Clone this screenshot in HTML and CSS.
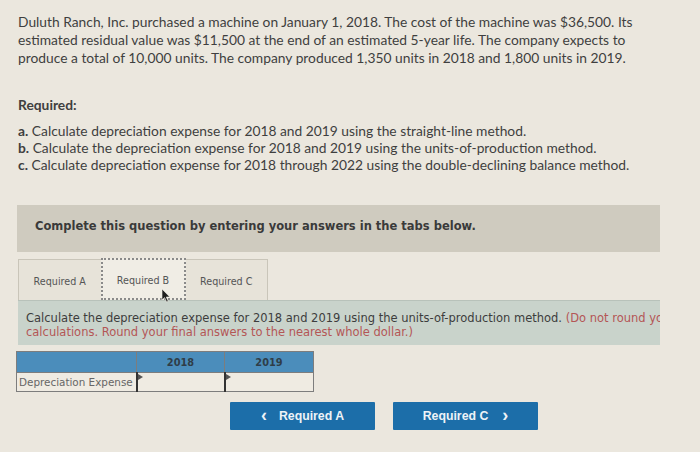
FILE: index.html
```html
<!DOCTYPE html>
<html>
<head>
<meta charset="utf-8">
<link rel="stylesheet" href="styles.css">
</head>
<body>
<div class="page">
  <p class="intro">Duluth Ranch, Inc. purchased a machine on January 1, 2018. The cost of the machine was $36,500. Its estimated residual value was $11,500 at the end of an estimated 5-year life. The company expects to produce a total of 10,000 units. The company produced 1,350 units in 2018 and 1,800 units in 2019.</p>
  <p class="req-title">Required:</p>
  <ul class="req-list">
    <li><b>a.</b> Calculate depreciation expense for 2018 and 2019 using the straight-line method.</li>
    <li><b>b.</b> Calculate the depreciation expense for 2018 and 2019 using the units-of-production method.</li>
    <li><b>c.</b> Calculate depreciation expense for 2018 through 2022 using the double-declining balance method.</li>
  </ul>
  <div class="band">Complete this question by entering your answers in the tabs below.</div>
  <div class="tabs">
    <div class="tab">Required A</div>
    <div class="tab active">Required B<svg class="cursor" width="10" height="15" viewBox="0 0 10 15"><path d="M1 1 L1 12 L3.6 9.6 L5.6 14 L7.2 13.3 L5.3 9 L8.8 9 Z" fill="#1e1e1e" stroke="#f4f1ea" stroke-width="0.6"/></svg></div>
    <div class="tab">Required C</div>
  </div>
  <div class="panel">
    <p class="panel-text">Calculate the depreciation expense for 2018 and 2019 using the units-of-production method. <span class="red">(Do not round your intermediate calculations. Round your final answers to the nearest whole dollar.)</span></p>
  </div>
  <table class="grid">
    <tr class="head">
      <th class="c1"></th>
      <th class="c2">2018</th>
      <th class="c3">2019</th>
    </tr>
    <tr class="row">
      <td class="label">Depreciation Expense</td>
      <td class="input"><span class="flag"></span></td>
      <td class="input"><span class="flag"></span></td>
    </tr>
  </table>
  <div class="nav">
    <div class="btn prev"><span class="chev">&lsaquo;</span>Required A</div>
    <div class="btn next">Required C<span class="chev">&rsaquo;</span></div>
  </div>
</div>
</body>
</html>
```
FILE: styles.css
```css
html, body {
  margin: 0;
  padding: 0;
  background: #ebe7de;
}
.page {
  width: 700px;
  height: 452px;
  overflow: hidden;
  padding: 13px 0 0 18px;
  box-sizing: border-box;
  font-family: Lato, "Open Sans", sans-serif;
  color: #3f3f3f;
}
.intro {
  margin: 0;
  width: 660px;
  font-size: 13.8px;
  line-height: 18px;
}
.req-title {
  margin: 29px 0 0 0;
  font-size: 13.8px;
  line-height: 18px;
  font-weight: bold;
}
.req-list {
  list-style: none;
  margin: 8px 0 0 0;
  padding: 0;
  font-size: 13.8px;
  line-height: 17px;
}
.req-list b {
  font-weight: bold;
}
.band {
  margin: 32px 0 0 -1px;
  width: 643px;
  height: 47px;
  box-sizing: border-box;
  padding: 14px 0 0 18px;
  background: #cfcbbf;
  font-family: "DejaVu Sans", Verdana, sans-serif;
  font-size: 11.5px;
  line-height: 14px;
  font-weight: bold;
  color: #3a3a3a;
}
.tabs {
  margin-top: 7px;
  display: flex;
  width: 250px;
  height: 41px;
  border: 1px solid #c9c5b9;
  border-bottom: none;
  box-sizing: border-box;
  background: #e7e3d9;
}
.tab {
  flex: 1;
  display: flex;
  align-items: center;
  justify-content: center;
  font-family: "DejaVu Sans", Verdana, sans-serif;
  font-size: 9.6px;
  color: #555;
  padding-top: 2px;
  position: relative;
}
.tab.active {
  background: #f0ede5;
  border: 2px dotted #8a8a8a;
  margin-top: -2px;
  flex: 0 0 85px;
  box-sizing: border-box;
}
.cursor {
  position: absolute;
  left: 58px;
  top: 28px;
}
.panel {
  width: 642px;
  height: 45px;
  box-sizing: border-box;
  background: #c9d3cb;
  border-top: 1px solid #b8c2ba;
  overflow: hidden;
  padding: 10px 0 0 8px;
}
.panel-text {
  margin: 0;
  width: 760px;
  font-family: "DejaVu Sans", Verdana, sans-serif;
  font-size: 11.5px;
  line-height: 14px;
  color: #3d3d3d;
}
.red {
  color: #b45656;
}
.grid {
  margin: 6px 0 0 -2px;
  border-collapse: collapse;
  font-family: "DejaVu Sans", Verdana, sans-serif;
}
.grid th, .grid td {
  padding: 0;
  border: 1px solid #7d7d7d;
}
.head th {
  height: 20px;
  background: #4b8dbb;
  font-size: 9.8px;
  font-weight: bold;
  color: #2f3d48;
  text-align: center;
}
.head .c1 { width: 119px; }
.head .c2 { width: 87px; }
.head .c3 { width: 88px; }
.row td {
  height: 18px;
  background: #efebe2;
}
.label {
  font-size: 10.4px;
  color: #666;
  padding-left: 2px !important;
  white-space: nowrap;
}
.input {
  position: relative;
  border-left: 2px solid #333 !important;
}
.flag {
  position: absolute;
  left: 0;
  top: 1px;
  width: 0;
  height: 0;
  border-top: 3px solid transparent;
  border-bottom: 3px solid transparent;
  border-left: 5px solid #555;
}
.nav {
  margin: 10px 0 0 212px;
  display: flex;
  gap: 18px;
}
.btn {
  width: 145px;
  height: 28px;
  background: #1c6ea9;
  color: #eef3f7;
  font-family: "Liberation Sans", Arial, sans-serif;
  font-weight: bold;
  font-size: 12.3px;
  display: flex;
  align-items: center;
  justify-content: center;
  border-radius: 1px;
}
.chev {
  font-size: 18px;
  line-height: 18px;
  margin-top: -3px;
}
.prev .chev { margin-right: 12px; }
.next .chev { margin-left: 14px; }
```
